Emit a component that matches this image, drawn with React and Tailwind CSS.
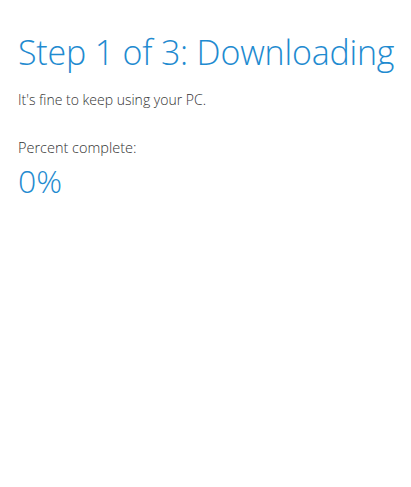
export default function App() {
  return (
    <div className="w-[411px] h-[487px] bg-white pl-[18px] pt-[30px]" style={{ fontFamily: '"Open Sans", "Noto Sans", sans-serif' }}>
      <h1 className="text-[34px] leading-[44px] font-light text-[#1f8bd0] tracking-[-0.2px]">Step 1 of 3: Downloading</h1>
      <p className="mt-[16px] text-[14px] leading-[20px] text-[#333] font-light">It's fine to keep using your PC.</p>
      <p className="mt-[28px] text-[14.5px] leading-[20px] text-[#333] font-light">Percent complete:</p>
      <p className="text-[32px] leading-[46px] font-light text-[#1f8bd0]">0%</p>
    </div>
  );
}
